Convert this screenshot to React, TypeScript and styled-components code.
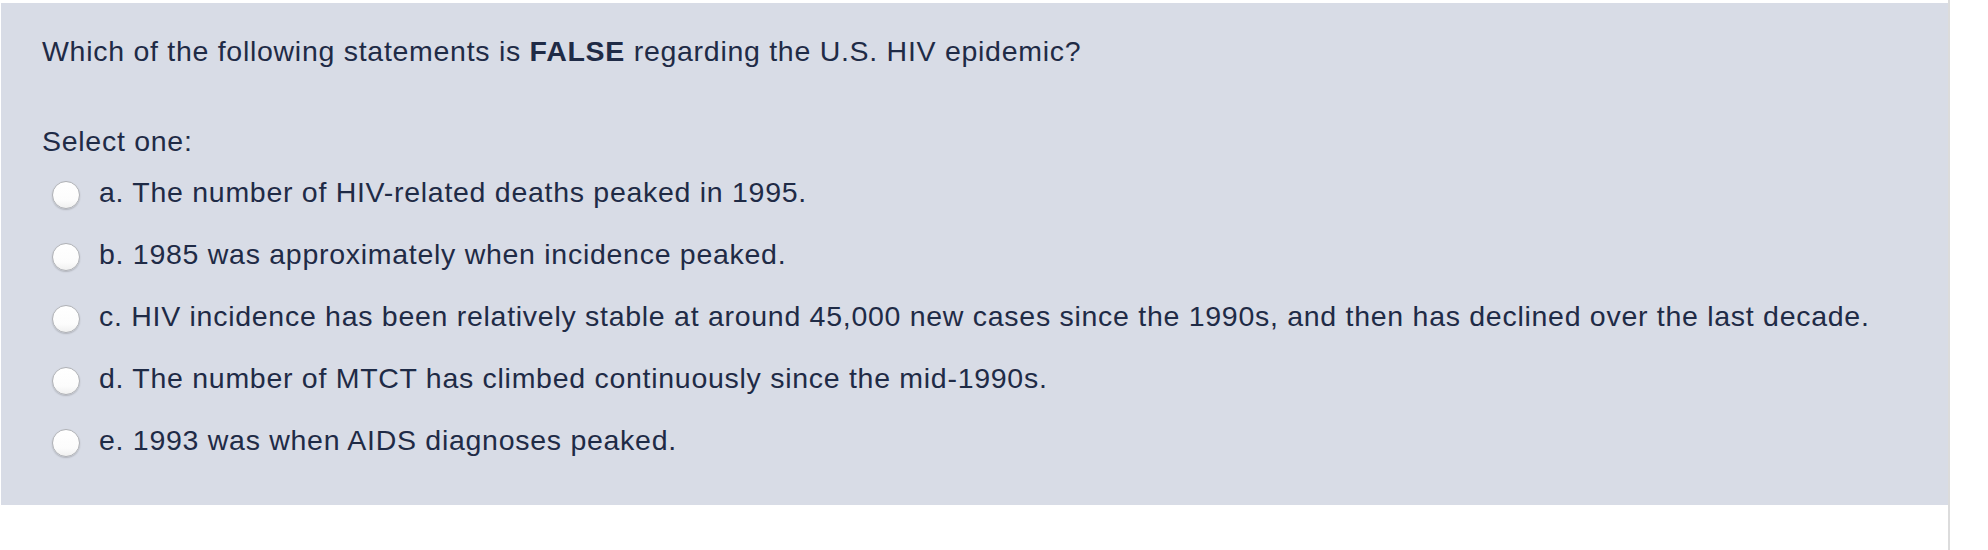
import React from "react";
import styled, { createGlobalStyle } from "styled-components";

const Global = createGlobalStyle`
  html, body { margin: 0; padding: 0; background: #ffffff; }
  body { font-family: "Liberation Sans", Arial, Helvetica, sans-serif; }
`;

const Page = styled.div`
  width: 1950px;
  min-height: 550px;
  border-right: 2px solid #dcdcdc;
  padding-top: 3px;
  padding-left: 1px;
  box-sizing: border-box;
  background: #ffffff;
`;

const Panel = styled.div`
  background: #d8dce6;
  height: 502px;
  box-sizing: border-box;
  padding: 32px 40px 0 41px;
  color: #1f2b46;
  font-size: 28.5px;
  line-height: 33.6px;
  letter-spacing: 0.72px;
`;

const Question = styled.p`
  margin: 0;
`;

const Prompt = styled.p`
  margin: 56px 0 0 0;
`;

const OptionList = styled.div`
  display: flex;
  flex-direction: column;
  margin-top: 18px;
`;

const Option = styled.label`
  display: flex;
  align-items: center;
  height: 62px;
  margin-top: -14px;
  margin-bottom: 14px;
  cursor: pointer;
`;

const Radio = styled.span`
  flex: none;
  width: 28px;
  height: 28px;
  border-radius: 50%;
  box-sizing: border-box;
  border: 1px solid #b0b2b6;
  background: linear-gradient(#ffffff, #fcfcfc 70%, #f0f0f0);
  box-shadow: 0 1px 1.5px rgba(0, 0, 0, 0.18);
  margin: 4px 19px 0 10px;
`;

const OptionText = styled.span`
  white-space: nowrap;
`;

const options = [
  "a. The number of HIV-related deaths peaked in 1995.",
  "b. 1985 was approximately when incidence peaked.",
  "c. HIV incidence has been relatively stable at around 45,000 new cases since the 1990s, and then has declined over the last decade.",
  "d. The number of MTCT has climbed continuously since the mid-1990s.",
  "e. 1993 was when AIDS diagnoses peaked.",
];

export default function App() {
  return (
    <>
      <Global />
      <Page>
        <Panel>
          <Question>
            Which of the following statements is <strong>FALSE</strong> regarding the U.S. HIV epidemic?
          </Question>
          <Prompt>Select one:</Prompt>
          <OptionList>
            {options.map((o) => (
              <Option key={o}>
                <Radio />
                <OptionText>{o}</OptionText>
              </Option>
            ))}
          </OptionList>
        </Panel>
      </Page>
    </>
  );
}
